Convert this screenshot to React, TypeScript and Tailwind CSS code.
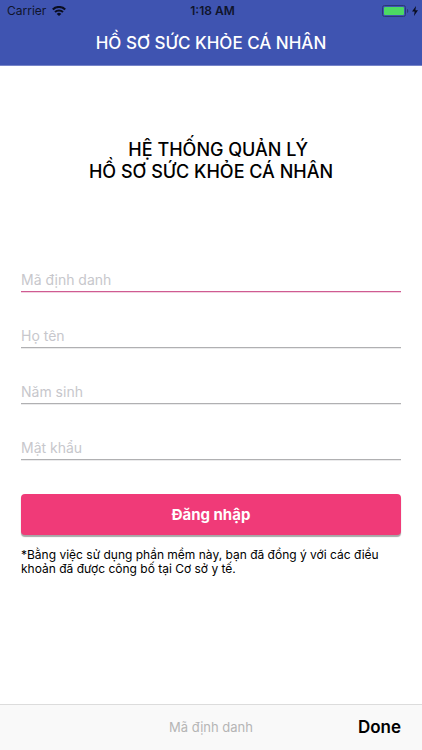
import React from "react";

const fields = [
  { id: "code", label: "Mã định danh", type: "text", active: true },
  { id: "name", label: "Họ tên", type: "text", active: false },
  { id: "year", label: "Năm sinh", type: "text", active: false },
  { id: "password", label: "Mật khẩu", type: "password", active: false },
];

function StatusBar() {
  return (
    <div className="grid h-[22px] grid-cols-3 items-center pr-1 pl-[7px] text-[12px] leading-4 text-[#10142c]">
      <div className="flex items-center gap-[6px]">
        <span>Carrier</span>
        <svg width="14" height="10" viewBox="0 0 14 10" fill="none" aria-hidden="true">
          <path d="M.8 3.5a9 9 0 0 1 12.4 0" stroke="#0a0d20" strokeWidth="2.2" />
          <path d="M3 6a5.8 5.8 0 0 1 8 0" stroke="#0a0d20" strokeWidth="2" />
          <path d="M7 10 4.7 7.9a3.3 3.3 0 0 1 4.6 0z" fill="#0a0d20" />
        </svg>
      </div>
      <span className="text-center font-semibold">1:18 AM</span>
      <div className="flex items-center justify-end gap-[3px]">
        <svg width="27" height="12" viewBox="0 0 27 12" aria-hidden="true">
          <rect x=".5" y=".5" width="23" height="11" rx="2" fill="none" stroke="#2b3877" strokeWidth="1" />
          <rect x="2" y="2" width="20" height="8" rx="1" fill="#4cd964" />
          <path d="M25 4v4c.8-.4 1.3-1.1 1.3-2s-.5-1.6-1.3-2z" fill="#2b3877" />
        </svg>
        <svg width="6" height="10" viewBox="0 0 6 10" aria-hidden="true">
          <path d="M4 0 0 5.6h2.6L2 10l4-5.8H3.4z" fill="#0a0d20" />
        </svg>
      </div>
    </div>
  );
}

export default function App() {
  return (
    <div className="flex min-h-screen flex-col bg-white font-['Inter','Noto_Sans',sans-serif] text-black">
      <header className="border-b border-[#7684c8] bg-[#3f54b1] bg-clip-padding">
        <StatusBar />
        <h1 className="text-center text-[17px] leading-[43px] font-medium text-white">HỒ SƠ SỨC KHỎE CÁ NHÂN</h1>
      </header>

      <main className="flex-1 px-[21px] pt-[73px]">
        <h2 className="text-center text-[18px] leading-[22px] font-medium">
          {"\u00a0\u00a0\u00a0HỆ THỐNG QUẢN LÝ"}
          <br />
          HỒ SƠ SỨC KHỎE CÁ NHÂN
        </h2>

        <form className="mt-[85px]" onSubmit={(e) => e.preventDefault()}>
          <div className="flex flex-col gap-8">
            {fields.map((f) => (
              <div
                key={f.id}
                className={
                  f.active
                    ? "border-b border-[#cf5b92] shadow-[0_1px_0_#f3d3e1]"
                    : "border-b border-[#b0b0b2] shadow-[0_1px_0_#ebebec]"
                }
              >
                <input
                  id={f.id}
                  type={f.type}
                  aria-label={f.label}
                  placeholder={f.label}
                  className="block h-[23px] w-full bg-transparent text-[14px] leading-5 outline-none placeholder:text-[#c7c7cc]"
                />
              </div>
            ))}
          </div>
          <button
            type="submit"
            className="mt-[34px] h-[41px] w-full rounded-[4px] bg-[#f03a78] text-[15px] leading-5 font-bold text-white shadow-[0_2px_1px_rgba(0,0,0,0.35)]"
          >
            Đăng nhập
          </button>
        </form>

        <p className="mt-[13px] text-[12px] leading-[14px]">
          *Bằng việc sử dụng phần mềm này, bạn đã đồng ý với các điều khoản đã được công bố tại Cơ sở y tế.
        </p>
      </main>

      <footer className="grid h-[46px] grid-cols-[1fr_auto_1fr] items-center border-t border-[#dcdcdc] bg-[#f9f9f9] px-[21px] pb-px">
        <span />
        <span className="text-[13px] leading-4 text-[#b5b5b5]">Mã định danh</span>
        <button type="button" className="justify-self-end text-[17px] leading-5 font-semibold">
          Done
        </button>
      </footer>
    </div>
  );
}
